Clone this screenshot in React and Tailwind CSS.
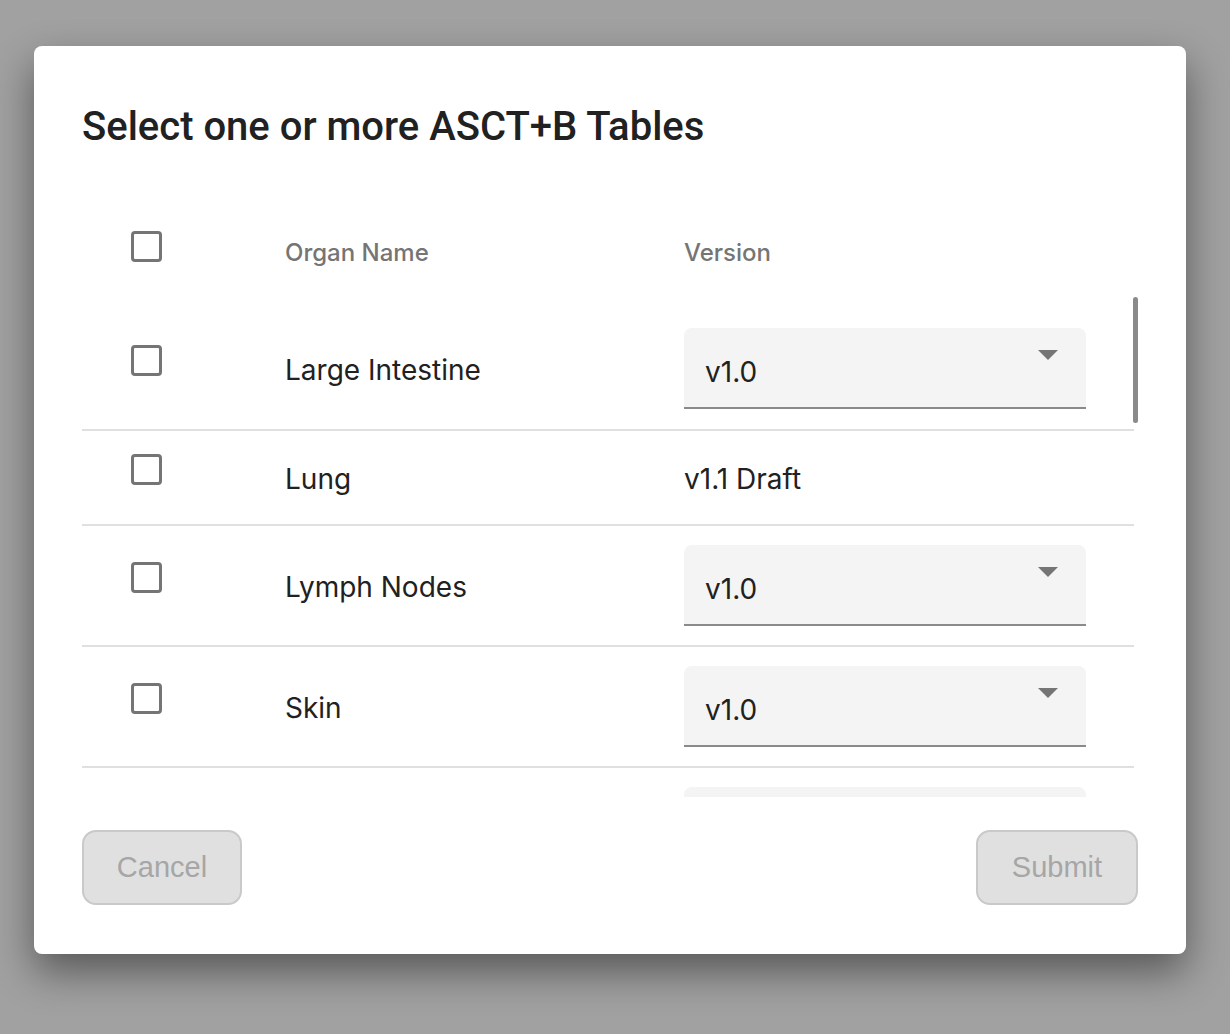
import React from 'react'

const rows = [
  { name: 'Large Intestine', version: 'v1.0', select: true, first: true },
  { name: 'Lung', version: 'v1.1 Draft', select: false },
  { name: 'Lymph Nodes', version: 'v1.0', select: true },
  { name: 'Skin', version: 'v1.0', select: true },
  { name: '', version: '', select: true },
]

const Box = () => (
  <div className="w-[31px] h-[31px] rounded-[4px] border-[3px] border-[#757575] bg-white" />
)

const VersionSelect = ({ value }) => (
  <div className="relative w-[402px] h-[81px] bg-[#f4f4f4] rounded-t-[8px] border-b-2 border-[#8a8a8a]">
    <span className="absolute left-[21px] top-[26px] text-[28px] leading-[36px] text-[#212121]">{value}</span>
    <svg className="absolute right-[28px] top-[22px]" width="20" height="10" viewBox="0 0 20 10">
      <path d="M0 0h20L10 10z" fill="#757575" />
    </svg>
  </div>
)

const App = () => {
  return (
    <div className="min-h-[1034px] w-full bg-[#a1a1a1] pl-[34px] pt-[46px]" style={{ fontFamily: 'Inter, "Noto Sans", sans-serif' }}>
      <div className="w-[1152px] h-[908px] bg-white rounded-[8px] shadow-[0_18px_40px_rgba(0,0,0,0.45)] px-[48px] pt-[58px]">
        <h1 className="text-[40px] leading-[46px] font-medium text-[#212121]" style={{ fontFamily: 'Roboto, sans-serif' }}>
          Select one or more ASCT+B Tables
        </h1>

        <div className="relative mt-[56px] w-[1056px] h-[591px] overflow-hidden">
          <div className="w-[1052px]">
            <div className="flex items-center h-[94px]">
              <div className="w-[203px] pl-[49px] -mt-[14px]"><Box /></div>
              <div className="w-[399px] text-[24px] font-medium text-[#757575]">Organ Name</div>
              <div className="text-[24px] font-medium text-[#757575]">Version</div>
            </div>
            {rows.map((r, i) => (
              <div key={i} className={`flex items-center border-b-2 border-[#e0e0e0] ${r.select ? (r.first ? 'pt-[28px] pb-[20px]' : 'py-[19px]') : 'h-[95px]'}`}>
                <div className="w-[203px] pl-[49px] -mt-[16px]">{r.name && <Box />}</div>
                <div className="w-[399px] text-[28px] pt-[2px] text-[#212121]">{r.name}</div>
                {r.select ? <VersionSelect value={r.version} /> : <div className="text-[28px] pt-[2px] text-[#212121]">{r.version}</div>}
              </div>
            ))}
          </div>
          <div className="absolute right-0 top-[91px] w-[5px] h-[126px] rounded-full bg-[#8a8a8a]" />
        </div>

        <div className="flex justify-between mt-[33px] w-[1056px]">
          <button className="w-[160px] h-[75px] rounded-[14px] border-2 border-[#c9c9c9] bg-[#e0e0e0] text-[29px] text-[#a6a6a6]" style={{ fontFamily: '"Liberation Sans", Arial, sans-serif' }}>
            Cancel
          </button>
          <button className="w-[162px] h-[75px] rounded-[14px] border-2 border-[#c9c9c9] bg-[#e0e0e0] text-[29px] text-[#a6a6a6]" style={{ fontFamily: '"Liberation Sans", Arial, sans-serif' }}>
            Submit
          </button>
        </div>
      </div>
    </div>
  )
}

export default App
